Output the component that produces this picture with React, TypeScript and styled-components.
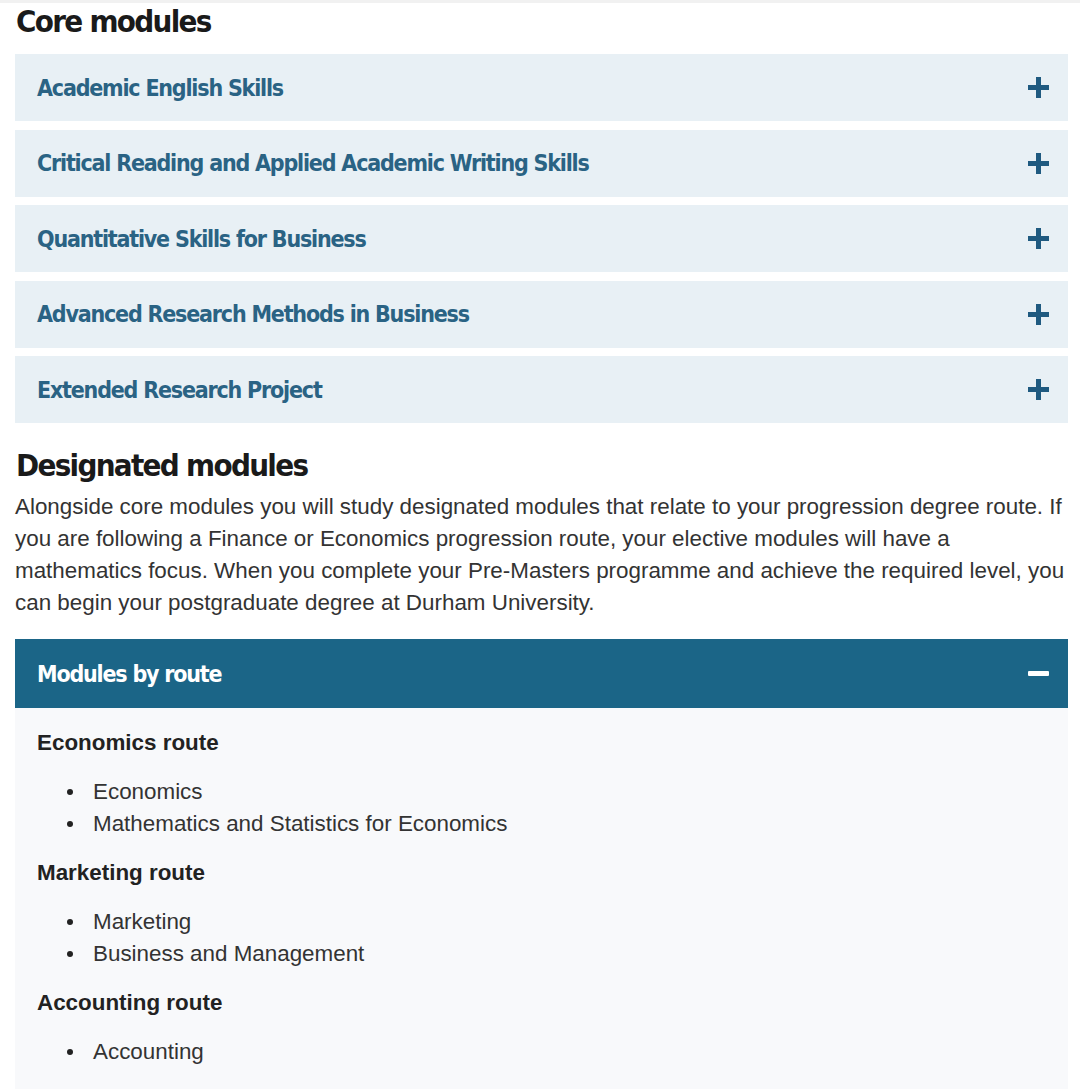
import React from "react";
import styled, { createGlobalStyle } from "styled-components";

const Global = createGlobalStyle`
  html, body { margin: 0; padding: 0; background: #ffffff; }
  body { font-family: "Liberation Sans", Arial, sans-serif; color: #333; }
`;

const Page = styled.div`
  padding: 0 12px 0 15px;
  border-top: 3px solid #f1f1f1;
`;

const Heading = styled.h2`
  margin: 0;
  font-family: "DejaVu Sans Condensed", "Liberation Sans Narrow", "Roboto", sans-serif;
  font-weight: 700;
  font-size: 31px;
  letter-spacing: -1.7px;
  line-height: 36px;
  color: #1a1a1a;
  padding-left: 1px;
`;

const Accordion = styled.div`
  display: flex;
  flex-direction: column;
  gap: 8.5px;
  margin-top: 15px;
`;

const Item = styled.div<{ $open?: boolean }>`
  display: flex;
  align-items: center;
  justify-content: space-between;
  height: ${(p) => (p.$open ? 69 : 67)}px;
  padding: 0 18px 0 22px;
  background: ${(p) => (p.$open ? "#1b6587" : "#e8f0f5")};
  box-sizing: border-box;
`;

const ItemTitle = styled.span<{ $open?: boolean }>`
  font-family: "DejaVu Sans Condensed", "Liberation Sans Narrow", "Roboto", sans-serif;
  font-weight: 700;
  font-size: 23px;
  letter-spacing: -1.2px;
  color: ${(p) => (p.$open ? "#ffffff" : "#2a6384")};
`;

const Icon = styled.svg`
  width: 21px;
  height: 21px;
  flex: none;
  margin-right: 1px;
`;

const Plus = () => (
  <Icon viewBox="0 0 21 21">
    <rect x="0" y="8" width="21" height="5" fill="#1f5a80" />
    <rect x="8" y="0" width="5" height="21" fill="#1f5a80" />
  </Icon>
);

const Minus = () => (
  <Icon viewBox="0 0 21 21">
    <rect x="0" y="8" width="21" height="5" rx="1" fill="#ffffff" />
  </Icon>
);

const Section = styled.div`
  margin-top: 24px;
`;

const Para = styled.p`
  margin: 8px 0 0 0;
  font-size: 22.4px;
  line-height: 32px;
  color: #333;
`;

const Panel = styled.div`
  margin-top: 20px;
`;

const Content = styled.div`
  background: #f8f9fb;
  padding: 20px 22px 30px 22px;
`;

const Route = styled.h4`
  margin: 0;
  font-size: 22.4px;
  font-weight: 700;
  line-height: 30px;
  color: #222;
`;

const List = styled.ul`
  margin: 18px 0 18px 0;
  padding-left: 30px;
  list-style: none;
  &:last-child { margin-bottom: 0; }
`;

const Li = styled.li`
  display: flex;
  align-items: center;
  gap: 20px;
  font-size: 22.4px;
  line-height: 32px;
  color: #333;
  &::before {
    content: "";
    width: 6px;
    height: 6px;
    border-radius: 50%;
    background: #222;
    flex: none;
  }
`;

const core = [
  "Academic English Skills",
  "Critical Reading and Applied Academic Writing Skills",
  "Quantitative Skills for Business",
  "Advanced Research Methods in Business",
  "Extended Research Project",
];

const routes = [
  { name: "Economics route", items: ["Economics", "Mathematics and Statistics for Economics"] },
  { name: "Marketing route", items: ["Marketing", "Business and Management"] },
  { name: "Accounting route", items: ["Accounting"] },
];

export default function App() {
  return (
    <>
      <Global />
      <Page>
        <Heading>Core modules</Heading>
        <Accordion>
          {core.map((c) => (
            <Item key={c}>
              <ItemTitle>{c}</ItemTitle>
              <Plus />
            </Item>
          ))}
        </Accordion>
        <Section>
          <Heading>Designated modules</Heading>
          <Para>
            Alongside core modules you will study designated modules that relate to your progression degree route. If
            you are following a Finance or Economics progression route, your elective modules will have a mathematics
            focus. When you complete your Pre-Masters programme and achieve the required level, you can begin your
            postgraduate degree at Durham University.
          </Para>
        </Section>
        <Panel>
          <Item $open>
            <ItemTitle $open>Modules by route</ItemTitle>
            <Minus />
          </Item>
          <Content>
            {routes.map((r) => (
              <React.Fragment key={r.name}>
                <Route>{r.name}</Route>
                <List>
                  {r.items.map((i) => (
                    <Li key={i}>{i}</Li>
                  ))}
                </List>
              </React.Fragment>
            ))}
          </Content>
        </Panel>
      </Page>
    </>
  );
}
